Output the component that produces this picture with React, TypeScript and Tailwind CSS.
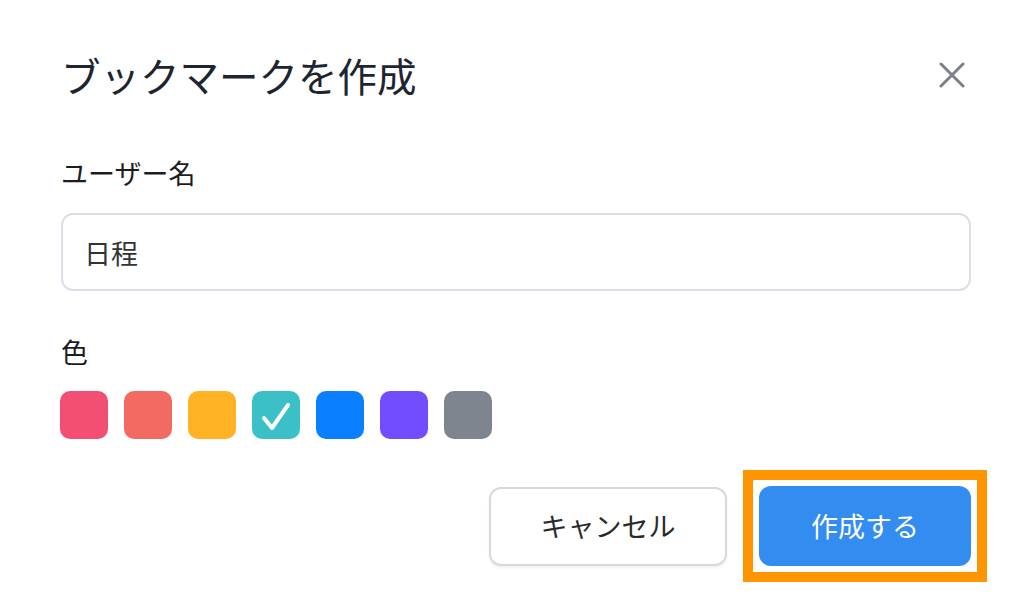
import { useState } from 'react'

const colors = ['#f34f73', '#f26a62', '#ffb224', '#3cc0c8', '#0a7fff', '#714dff', '#7f858e']

export default function App() {
  const [name, setName] = useState('日程')
  const [selected, setSelected] = useState(3)

  return (
    <div className="w-[1032px] h-[610px] bg-white px-[61px] pt-[50px] font-['Noto_Sans_CJK_JP','Noto_Sans',sans-serif]">
      {/* header */}
      <div className="flex items-center justify-between h-[50px]">
        <h1 className="text-[39.5px] leading-[50px] text-[#1c2530] font-normal">ブックマークを作成</h1>
        <button className="mr-[6px] text-[#7b8089]">
          <svg width="26" height="26" viewBox="0 0 26 26" fill="none" stroke="currentColor" strokeWidth="3" strokeLinecap="round">
            <path d="M2 2 L24 24 M24 2 L2 24" />
          </svg>
        </button>
      </div>

      <label className="block mt-[58px] text-[27px] leading-[30px] text-[#1d1d1f]">ユーザー名</label>
      <input
        value={name}
        onChange={(e) => setName(e.target.value)}
        className="mt-[25px] block w-full h-[78px] rounded-[12px] border-2 border-[#dadfe7] px-[21px] text-[27px] text-[#333] outline-none"
      />

      <div className="mt-[46px] text-[27px] leading-[30px] text-[#1d1d1f]">色</div>
      <div className="mt-[24px] -ml-px flex gap-[16px]">
        {colors.map((c, i) => (
          <button
            key={c}
            onClick={() => setSelected(i)}
            className="w-[48px] h-[48px] rounded-[10px] flex items-center justify-center"
            style={{ backgroundColor: c }}
          >
            {selected === i && (
              <svg width="48" height="48" viewBox="0 0 48 48" fill="none" stroke="white" strokeWidth="4" strokeLinecap="round" strokeLinejoin="round">
                <path d="M12 27 L20 37 L36 14" />
              </svg>
            )}
          </button>
        ))}
      </div>

      {/* footer */}
      <div className="mt-[31px] flex items-center justify-end -mr-[16px]">
        <button className="w-[238px] h-[79px] rounded-[12px] border-2 border-[#d9d9d9] bg-white text-[27px] text-[#2a2a2a] shadow-[0_2px_3px_rgba(0,0,0,0.06)]">
          キャンセル
        </button>
        <div className="ml-[16px] border-[10px] border-[#ff9500] p-[6px]">
          <button className="block w-[212px] h-[80px] rounded-[12px] bg-[#338cf0] text-[27px] text-white">
            作成する
          </button>
        </div>
      </div>
    </div>
  )
}
